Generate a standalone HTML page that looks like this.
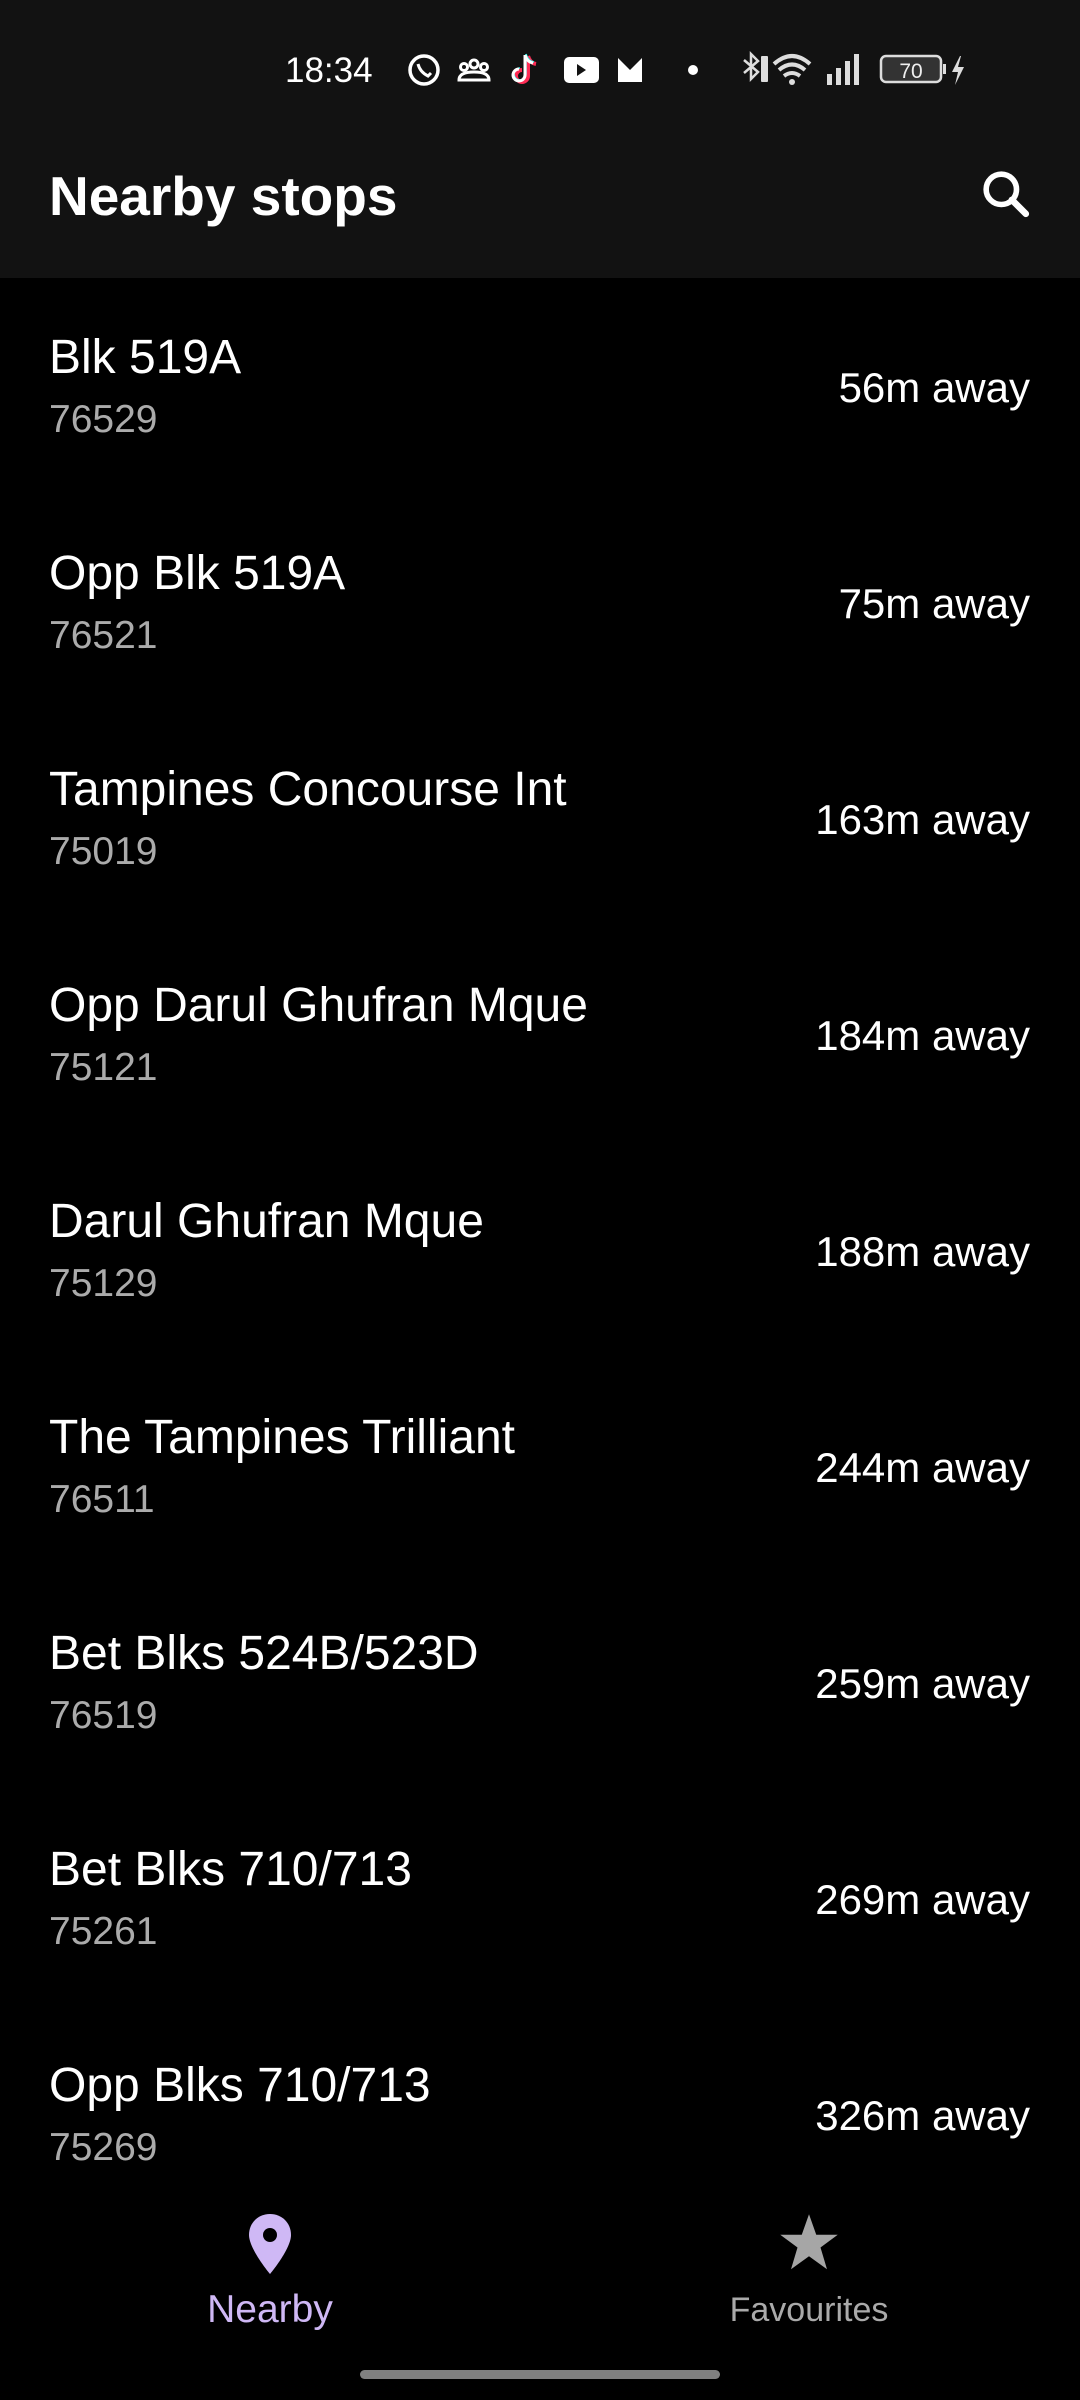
<!DOCTYPE html>
<html><head><meta charset="utf-8"><style>
*{margin:0;padding:0;box-sizing:border-box}
body{width:1080px;height:2400px;background:#000;font-family:"Liberation Sans",sans-serif;color:#fff;position:relative;overflow:hidden}
.hdr{position:absolute;left:0;top:0;width:1080px;height:278px;background:#121212}
.t{position:absolute;white-space:nowrap}
.name{font-size:48px;left:49px;line-height:1}
.code{font-size:39px;left:49px;color:#ababab;line-height:1}
.dist{font-size:42px;right:50px;line-height:1}
</style></head><body>
<div class="hdr">
<div class="t" style="left:285px;top:53px;font-size:35px;line-height:1">18:34</div>
<svg style="position:absolute;left:404px;top:50px" width="600" height="40" viewBox="0 0 600 40">
<circle cx="20" cy="20" r="14" fill="none" stroke="#fff" stroke-width="3.5"/>
<path d="M14 14q2 8 10 12l3-3" stroke="#fff" stroke-width="3" fill="none"/>
<circle cx="70" cy="14" r="4" fill="none" stroke="#fff" stroke-width="3"/><circle cx="60" cy="17" r="3.5" fill="none" stroke="#fff" stroke-width="3"/><circle cx="80" cy="17" r="3.5" fill="none" stroke="#fff" stroke-width="3"/>
<path d="M55 30q0-8 15-8t15 8z" fill="none" stroke="#fff" stroke-width="3"/>
<path d="M124 6v20a6 6 0 1 1-6-6M124 6q2 7 8 8" stroke="#fe2c55" stroke-width="4" fill="none"/>
<path d="M122 4v20a6 6 0 1 1-6-6M122 4q2 7 8 8" stroke="#25f4ee" stroke-width="1.5" fill="none"/>
<path d="M121 5v20a6 6 0 1 1-6-6M121 5q2 7 8 8" stroke="#fff" stroke-width="3" fill="none"/>
<rect x="160" y="7" width="35" height="26" rx="5" fill="#fff"/><path d="M173 14v12l9-6z" fill="#121212"/>
<path d="M214 32V8l12 12 12-12v24z" fill="#fff"/>
<circle cx="289" cy="20" r="5" fill="#fff"/>
<path d="M340 10l14 12-7 7V4l7 7-14 12" stroke="#ddd" stroke-width="2.5" fill="none"/>
<rect x="357" y="6" width="7" height="26" rx="1" fill="#ddd"/>
<path d="M370 14q18-16 36 0M375 20q13-11 26 0M380 26q8-6 16 0" stroke="#ddd" stroke-width="4" fill="none"/><circle cx="388" cy="32" r="3" fill="#ddd"/>
<rect x="423" y="24" width="5" height="11" fill="#ddd"/><rect x="432" y="18" width="5" height="17" fill="#ddd"/><rect x="441" y="11" width="5" height="24" fill="#ddd"/><rect x="450" y="4" width="5" height="31" fill="#ddd"/>
<rect x="477" y="6" width="60" height="26" rx="5" fill="#333" stroke="#ddd" stroke-width="2.5"/><rect x="539" y="14" width="3" height="10" fill="#ddd"/>
<text x="507" y="28" font-size="21" fill="#eee" text-anchor="middle" font-family="Liberation Sans">70</text>
<path d="M556 6l-8 16h6l-3 13 9-18h-6l3-11z" fill="#ddd"/>
</svg>
<div class="t" style="left:49px;top:169px;font-size:55px;font-weight:bold;line-height:1">Nearby stops</div>
<svg style="position:absolute;left:978px;top:166px" width="56" height="56" viewBox="0 0 24 24"><circle cx="10" cy="10" r="6.5" fill="none" stroke="#fff" stroke-width="2.4"/><path d="M14.5 14.5l6 6" stroke="#fff" stroke-width="2.8" stroke-linecap="round"/></svg>
</div>

<div class="t name" style="top:334px">Blk 519A</div><div class="t code" style="top:400px">76529</div><div class="t dist" style="top:367px">56m away</div>
<div class="t name" style="top:550px">Opp Blk 519A</div><div class="t code" style="top:616px">76521</div><div class="t dist" style="top:583px">75m away</div>
<div class="t name" style="top:766px">Tampines Concourse Int</div><div class="t code" style="top:832px">75019</div><div class="t dist" style="top:799px">163m away</div>
<div class="t name" style="top:982px">Opp Darul Ghufran Mque</div><div class="t code" style="top:1048px">75121</div><div class="t dist" style="top:1015px">184m away</div>
<div class="t name" style="top:1198px">Darul Ghufran Mque</div><div class="t code" style="top:1264px">75129</div><div class="t dist" style="top:1231px">188m away</div>
<div class="t name" style="top:1414px">The Tampines Trilliant</div><div class="t code" style="top:1480px">76511</div><div class="t dist" style="top:1447px">244m away</div>
<div class="t name" style="top:1630px">Bet Blks 524B/523D</div><div class="t code" style="top:1696px">76519</div><div class="t dist" style="top:1663px">259m away</div>
<div class="t name" style="top:1846px">Bet Blks 710/713</div><div class="t code" style="top:1912px">75261</div><div class="t dist" style="top:1879px">269m away</div>
<div class="t name" style="top:2062px">Opp Blks 710/713</div><div class="t code" style="top:2128px">75269</div><div class="t dist" style="top:2095px">326m away</div>

<div style="position:absolute;left:0;top:2186px;width:1080px;height:214px;background:#000"></div>
<svg style="position:absolute;left:249px;top:2214px" width="42" height="60" viewBox="0 0 42 60"><path d="M21 0C9 0 0 9 0 21c0 14 21 39 21 39s21-25 21-39C42 9 33 0 21 0z" fill="#cfb8f5"/><circle cx="21" cy="21" r="7" fill="#000"/></svg>
<div class="t" style="left:0;width:540px;text-align:center;top:2290px;font-size:39px;color:#cfb8f5;line-height:1">Nearby</div>
<svg style="position:absolute;left:779px;top:2214px" width="60" height="58" viewBox="0 0 24 23"><path d="M12 0l2.9 8.2h8.6l-6.9 5.1 2.6 8.7L12 16.8 4.8 22l2.6-8.7L.5 8.2h8.6z" fill="#a6a6a6"/></svg>
<div class="t" style="left:540px;width:538px;text-align:center;top:2293px;font-size:34px;color:#aaa;line-height:1">Favourites</div>
<div style="position:absolute;left:360px;top:2370px;width:360px;height:9px;border-radius:5px;background:#808080"></div>
</body></html>
